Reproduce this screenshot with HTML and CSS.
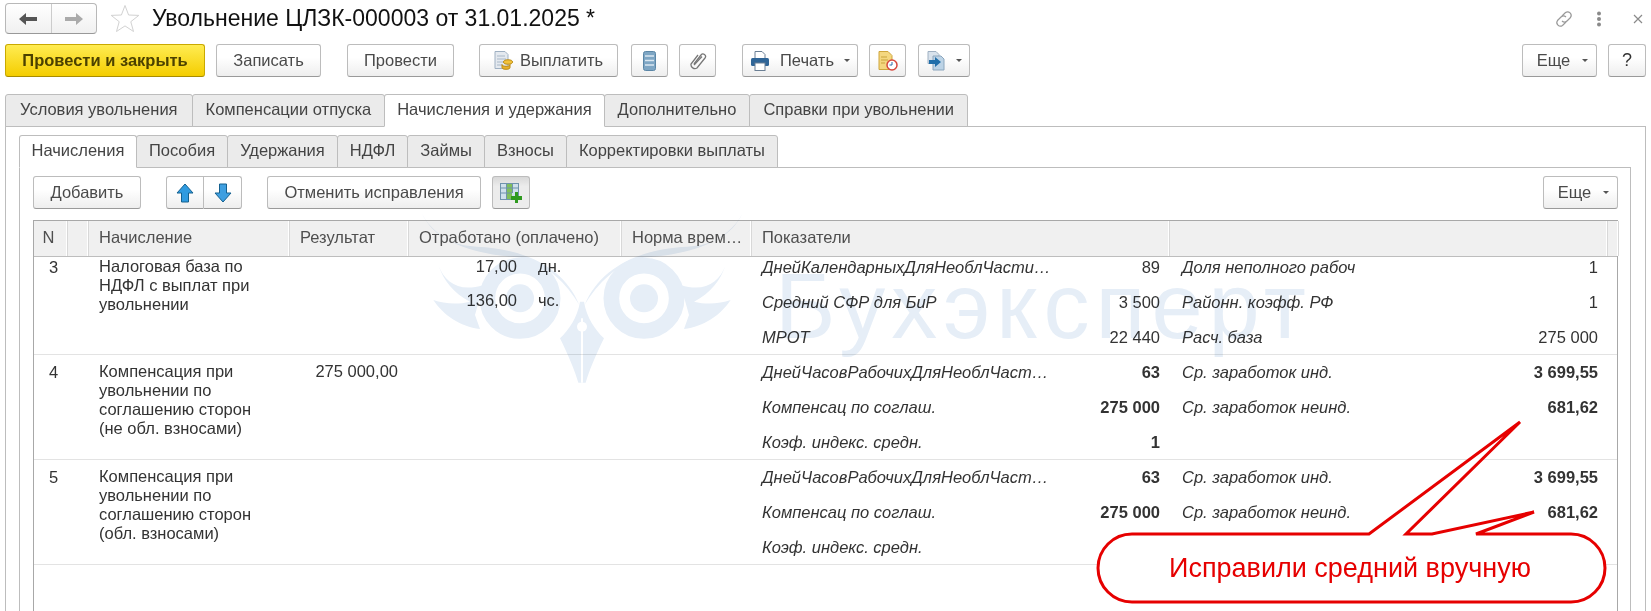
FILE: index.html
```html
<!DOCTYPE html>
<html lang="ru">
<head>
<meta charset="utf-8">
<title>Увольнение ЦЛЗК-000003</title>
<link rel="stylesheet" href="styles.css">
</head>
<body>
<div class="page">
  <header class="head">
    <div class="nav">
      <button class="nav-btn"><svg width="18" height="14" viewBox="0 0 18 14"><path d="M0 7 7 1v4h11v4H7v4z" fill="#555"/></svg></button>
      <button class="nav-btn"><svg width="18" height="14" viewBox="0 0 18 14"><path d="M18 7 11 1v4H0v4h11v4z" fill="#aaa"/></svg></button>
    </div>
    <svg class="star" width="30" height="29" viewBox="0 0 30 29"><path d="M15 1.500 18.600 11 28.800 11.400 20.800 17.700 23.500 27.500 15 21.900 6.500 27.500 9.200 17.700 1.200 11.400 11.400 11z" fill="#fff" stroke="#d2d2d2"/></svg>
    <h1 class="title">Увольнение ЦЛЗК-000003 от 31.01.2025 *</h1>
    <div class="head-tools">
      <svg width="22" height="22" viewBox="0 0 22 22" fill="none" stroke="#999" stroke-width="1.200"><path d="M9 8 12.500 4.500a3.600 3.600 0 0 1 5 5L14 13a3.600 3.600 0 0 1-5 0"/><path d="M13 14 9.500 17.500a3.600 3.600 0 0 1-5-5L8 9a3.600 3.600 0 0 1 5 0"/></svg>
      <svg class="dots" width="6" height="16" viewBox="0 0 6 16"><circle cx="3" cy="2.500" r="2" fill="#8a8a8a"/><circle cx="3" cy="8" r="2" fill="#8a8a8a"/><circle cx="3" cy="13.500" r="2" fill="#8a8a8a"/></svg>
      <svg class="close" width="10" height="10" viewBox="0 0 10 10"><path d="M1 1 9 9M9 1 1 9" stroke="#8a8a8a" stroke-width="1.200"/></svg>
    </div>
  </header>

  <div class="toolbar">
    <button class="btn btn-primary w-close">Провести и закрыть</button>
    <button class="btn w-save">Записать</button>
    <button class="btn w-post">Провести</button>
    <button class="btn w-pay">
      <svg width="20" height="19" viewBox="0 0 20 19"><path d="M1 .5h10l3 3v14H1z" fill="#e4e9ef" stroke="#9fb0c2"/><path d="M3 5h8M3 8h9M3 11h6M3 14h5" stroke="#a9b8c8"/><ellipse cx="14" cy="11" rx="4.500" ry="2.200" fill="#f3c33a" stroke="#b98a14"/><path d="M8 13.500c0 1 1 1.800 4 1.800s4-.8 4-1.800v3c0 1-1 1.800-4 1.800s-4-.8-4-1.800z" fill="#e9b128" stroke="#b98a14"/></svg>
      Выплатить
    </button>
    <button class="btn w-icon">
      <svg width="13" height="20" viewBox="0 0 13 20"><rect x=".5" y=".5" width="12" height="19" rx="2" fill="#7ea6c4" stroke="#5b86a6"/><path d="M2 5h9M2 9.500h9M2 14h9" stroke="#dbe8f1" stroke-width="1.500"/></svg>
    </button>
    <button class="btn w-icon">
      <svg width="18" height="20" viewBox="0 0 18 20" fill="none" stroke="#777" stroke-width="1.300"><path d="M5 13 12 4a2.500 2.500 0 0 1 4 3L8 17a4 4 0 0 1-6-4l7-9"/><path d="M5 14 13 5.500"/></svg>
    </button>
    <button class="btn w-print">
      <svg width="20" height="20" viewBox="0 0 20 20"><path d="M5 .5h7l3 3V8H5z" fill="#fff" stroke="#6b7f94"/><rect x="1" y="7" width="18" height="8" rx="1.500" fill="#2f6597"/><rect x="5" y="12" width="10" height="7.500" fill="#fff" stroke="#6b7f94"/></svg>
      Печать <i class="caret"></i>
    </button>
    <button class="btn w-icon">
      <svg width="20" height="20" viewBox="0 0 20 20"><path d="M1 .5h9l4 4v14H1z" fill="#f4d77f" stroke="#cfa63c"/><path d="M3 6h6M3 9h7M3 12h4" stroke="#c9a33d"/><circle cx="14" cy="14" r="5" fill="#fff" stroke="#d6473c" stroke-width="1.500"/><path d="M14 11v3h-2.500" stroke="#2c6fa8" fill="none"/></svg>
    </button>
    <button class="btn w-send">
      <svg width="19" height="20" viewBox="0 0 19 20"><path d="M1 .5h8l3 3v9H1z" fill="#d8e2ec" stroke="#9fb0c2"/><path d="M6 5h8l3 3v11H6z" fill="#bcd3e6" stroke="#8ca6bd"/><path d="M2 9 8 9V6l6 5-6 5v-3H2z" fill="#1f6eaa"/></svg>
      <i class="caret"></i>
    </button>
    <span class="spacer"></span>
    <button class="btn w-more">Еще <i class="caret"></i></button>
    <button class="btn w-help">?</button>
  </div>

  <nav class="tabs main-tabs">
    <a class="tab">Условия увольнения</a>
    <a class="tab">Компенсации отпуска</a>
    <a class="tab active">Начисления и удержания</a>
    <a class="tab">Дополнительно</a>
    <a class="tab">Справки при увольнении</a>
  </nav>
  <section class="panel">
    <nav class="tabs sub-tabs">
      <a class="tab active">Начисления</a>
      <a class="tab">Пособия</a>
      <a class="tab">Удержания</a>
      <a class="tab">НДФЛ</a>
      <a class="tab">Займы</a>
      <a class="tab">Взносы</a>
      <a class="tab">Корректировки выплаты</a>
    </nav>
    <section class="panel inner">
      <div class="toolbar sub">
        <button class="btn w-add">Добавить</button>
        <div class="group">
          <button class="btn w-arrow"><svg width="18" height="20" viewBox="0 0 18 20"><path d="M9 1 17 10H12.500V19H5.500V10H1z" fill="#2f9be0" stroke="#14608f"/></svg></button>
          <button class="btn w-arrow"><svg width="18" height="20" viewBox="0 0 18 20"><path d="M9 19 17 10H12.500V1H5.500V10H1z" fill="#3f9fe0" stroke="#14608f"/></svg></button>
        </div>
        <button class="btn w-undo">Отменить исправления</button>
        <button class="btn w-toggle pressed">
          <svg width="22" height="20" viewBox="0 0 22 20"><rect x=".5" y=".5" width="18" height="16" fill="#cfe0ec" stroke="#6f93ac"/><rect x="7" y="1" width="5" height="15" fill="#7fbf5a"/><path d="M1 5h17M1 10h11M6.500 1v15M12.500 1v9" stroke="#6f93ac"/><path d="M15 9v4h-4v4h4v3h3v-3h4v-4h-4V9z" fill="#2e9a1f"/></svg>
        </button>
        <span class="spacer"></span>
        <button class="btn w-more">Еще <i class="caret"></i></button>
      </div>

      <div class="table">
        <div class="cols thead">
          <div class="th center">N</div>
          <div class="th"></div>
          <div class="th">Начисление</div>
          <div class="th">Результат</div>
          <div class="th">Отработано (оплачено)</div>
          <div class="th">Норма врем…</div>
          <div class="th">Показатели</div>
          <div class="th"></div>
          <div class="th"></div>
        </div>
        <div class="tbody">
          <div class="cols row first">
            <div class="td center">3</div>
            <div class="td"></div>
            <div class="td">Налоговая база по<br>НДФЛ с выплат при<br>увольнении</div>
            <div class="td"></div>
            <div class="worked">
              <span class="wv">17,00</span><span class="wu">дн.</span>
              <span class="wv">136,00</span><span class="wu">чс.</span>
            </div>
            <div class="td"></div>
            <div class="ind">
              <span class="il">ДнейКалендарныхДляНеоблЧасти…</span><span class="iv">89</span><span class="il">Доля неполного рабоч</span><span class="iv">1</span>
              <span class="il">Средний СФР для БиР</span><span class="iv">3 500</span><span class="il">Районн. коэфф. РФ</span><span class="iv">1</span>
              <span class="il">МРОТ</span><span class="iv">22 440</span><span class="il">Расч. база</span><span class="iv">275 000</span>
            </div>
          </div>
          <div class="cols row">
            <div class="td center">4</div>
            <div class="td"></div>
            <div class="td">Компенсация при<br>увольнении по<br>соглашению сторон<br>(не обл. взносами)</div>
            <div class="td result">275 000,00</div>
            <div class="td"></div>
            <div class="td"></div>
            <div class="ind strong">
              <span class="il">ДнейЧасовРабочихДляНеоблЧаст…</span><span class="iv">63</span><span class="il">Ср. заработок инд.</span><span class="iv">3 699,55</span>
              <span class="il">Компенсац по соглаш.</span><span class="iv">275 000</span><span class="il">Ср. заработок неинд.</span><span class="iv">681,62</span>
              <span class="il">Коэф. индекс. средн.</span><span class="iv">1</span><span class="il"></span><span class="iv"></span>
            </div>
          </div>
          <div class="cols row">
            <div class="td center">5</div>
            <div class="td"></div>
            <div class="td">Компенсация при<br>увольнении по<br>соглашению сторон<br>(обл. взносами)</div>
            <div class="td"></div>
            <div class="td"></div>
            <div class="td"></div>
            <div class="ind strong">
              <span class="il">ДнейЧасовРабочихДляНеоблЧаст…</span><span class="iv">63</span><span class="il">Ср. заработок инд.</span><span class="iv">3 699,55</span>
              <span class="il">Компенсац по соглаш.</span><span class="iv">275 000</span><span class="il">Ср. заработок неинд.</span><span class="iv">681,62</span>
              <span class="il">Коэф. индекс. средн.</span><span class="iv"></span><span class="il"></span><span class="iv"></span>
            </div>
          </div>
        </div>
      </div>
    </section>
  </section>
</div>

<div class="watermark">
  <svg class="owl" width="340" height="200" viewBox="0 0 1020 600">
    <g fill="#e6eef7">
      <path d="M5 25C40 95 100 122 170 125 300 130 430 180 478 300 440 235 380 175 300 158 200 150 60 130 5 25Z"/>
      <path d="M968 25C933 95 873 122 803 125 673 130 543 180 494 300 532 235 592 175 672 158 772 150 912 130 968 25Z"/>
      <path d="M55 180C75 235 120 262 190 240L165 330 180 372C120 365 70 330 40 285 70 295 110 300 150 290 100 265 70 225 55 180Z"/>
      <path d="M917 180C897 235 852 262 782 240L807 330 792 372C852 365 902 330 932 285 902 295 862 300 822 290 872 265 902 225 917 180Z"/>
      <path d="M480 290C472 340 445 375 420 400 445 450 465 500 475 533H497C507 500 527 450 552 400 527 375 500 340 492 290Z"/>
    </g>
    <g fill="none" stroke="#e6eef7" stroke-width="47">
      <circle cx="300" cy="280" r="98"/>
      <circle cx="672" cy="280" r="98"/>
    </g>
    <g fill="#e6eef7">
      <circle cx="300" cy="280" r="42"/>
      <circle cx="672" cy="280" r="42"/>
    </g>
    <path d="M486 340V533" stroke="#fff" stroke-width="6"/>
    <circle cx="486" cy="365" r="15" fill="#fff"/>
  </svg>
  <span class="wm-text">Бухэксперт</span>
</div>

<div class="callout">
  <svg width="1651" height="611" viewBox="0 0 1651 611"><path d="M1132 534H1369L1520 422 1406 534H1432L1534 512 1476 534H1571A34 34 0 0 1 1571 602H1132A34 34 0 0 1 1132 534Z" fill="#fff" stroke="#e60000" stroke-width="3" stroke-linejoin="miter"/></svg>
  <span class="callout-text">Исправили средний вручную</span>
</div>
</body>
</html>
```

FILE: styles.css
```css
* { box-sizing: border-box; }
html, body { margin: 0; padding: 0; }
body {
  width: 1651px;
  height: 611px;
  overflow: hidden;
  position: relative;
  background: #fff;
  font-family: "Liberation Sans", Arial, sans-serif;
  font-size: 16.5px;
  color: #333;
}
.page { height: 640px; padding: 3px 5px 0; display: flex; flex-direction: column; }

.head { display: flex; align-items: center; height: 31px; }
.nav {
  display: flex; width: 92px; height: 31px;
  border: 1px solid #b8b8b8; border-bottom-color: #999; border-radius: 4px;
  background: linear-gradient(#fff, #f0f0f0);
  overflow: hidden;
}
.nav-btn { flex: 1; border: 0; background: none; padding: 0; display: flex; align-items: center; justify-content: center; }
.nav-btn + .nav-btn { border-left: 1px solid #ccc; }
.star { margin-left: 13px; }
.title { margin: 0 0 0 12px; font-size: 23px; font-weight: 400; color: #111; white-space: nowrap; }
.head-tools { margin-left: auto; display: flex; align-items: center; padding-right: 3px; }
.dots { margin-left: 21px; }
.close { margin-left: 31px; }

.toolbar { display: flex; height: 33px; margin-top: 10px; flex: none; }
.toolbar.sub { margin-top: 0; }
.spacer { flex: 1; }
.btn {
  height: 33px; padding: 0; margin-right: 11px;
  display: inline-flex; align-items: center; justify-content: center; gap: 10px;
  font: inherit; color: #4a4a4a;
  border: 1px solid #bcbcbc; border-bottom-color: #9a9a9a; border-radius: 3px;
  background: linear-gradient(#fff 40%, #eee);
  white-space: nowrap;
}
.btn-primary {
  font-weight: 700; color: #4b4100;
  border-color: #c9a900; border-bottom-color: #a88c00;
  background: linear-gradient(#ffec52, #f4cd00);
}
.w-close { width: 200px; }
.w-save { width: 105px; margin-right: 26px; }
.w-post { width: 107px; margin-right: 25px; }
.w-pay { width: 139px; margin-right: 13px; gap: 6px; }
.w-icon { width: 37px; }
.w-toggle { width: 38px; }
.w-print { width: 116px; margin-left: 15px; }
.w-send { width: 52px; margin-left: 1px; }
.w-more { width: 75px; gap: 12px; padding-left: 6px; }
.w-help { width: 38px; margin-right: 0; font-size: 18px; color: #333; }
.w-add { width: 108px; margin-right: 25px; }
.w-undo { width: 214px; }
.pressed { background: linear-gradient(#d8d8d8, #ececec 30%, #ececec); }
.group { display: flex; margin-right: 25px; }
.w-arrow { width: 38px; margin: 0; border-radius: 3px 0 0 3px; }
.w-arrow + .w-arrow { border-left: 0; border-radius: 0 3px 3px 0; }
.toolbar > .btn:last-child { margin-right: 0; }
.caret { width: 0; height: 0; border: 3px solid transparent; border-top: 3px solid #555; border-bottom: 0; }

.tabs { display: flex; height: 33px; margin-top: 17px; position: relative; z-index: 1; flex: none; }
.tab {
  height: 33px; padding: 0 13px 2px;
  display: flex; align-items: center;
  background: #ebebeb; color: #444; white-space: nowrap;
  border: 1px solid #bdbdbd; border-radius: 3px 3px 0 0;
  margin-right: -1px;
}
.tab.active { background: #fff; border-bottom-color: #fff; z-index: 1; position: relative; }
.main-tabs .tab:first-child { padding-left: 14px; padding-right: 14px; }
.main-tabs .tab.active { padding-left: 12px; padding-right: 12px; }
.sub-tabs .tab { padding-left: 12px; padding-right: 12px; }
.sub-tabs .tab.active { padding-left: 11.5px; padding-right: 11.5px; }
.panel {
  flex: 1; display: flex; flex-direction: column;
  margin-top: -1px; padding: 0 14px 0 13px;
  border: 1px solid #bdbdbd;
  min-height: 0;
}
.panel > .tabs { margin-top: 8px; }
.panel.inner { padding: 8px 12px 0 13px; }

.table {
  flex: 1; margin-top: 11px; min-height: 0;
  display: flex; flex-direction: column;
  border: 1px solid #a8a8a8; border-bottom: 0;
}
.cols { display: grid; grid-template-columns: 34px 21px 201px 119px 213px 130px 418px 438px 10px; }
.thead { height: 36px; flex: none; background: #f0f0f0; border-bottom: 1px solid #bdbdbd; }
.th {
  display: flex; align-items: center; padding: 0 0 2px 10px;
  border-right: 1px solid #d8d8d8; box-shadow: inset -1px 0 0 #fff;
  color: #4f4f4f; white-space: nowrap;
}
.th.center { justify-content: center; padding: 0 4px 2px 0; }
.tbody { flex: 1; overflow: hidden; min-height: 0; }
.row { height: 105px; border-bottom: 1px solid #e3e3e3; }
.row.first { margin-top: -7px; }
.td { padding: 7px 0 0 10px; line-height: 19px; color: #333; }
.td.center { text-align: center; padding-left: 5px; padding-top: 8px; }
.td.result { text-align: right; padding-right: 11px; }
.worked { display: grid; grid-template-columns: 108px auto; grid-auto-rows: 33.500px; column-gap: 21px; align-items: center; align-content: start; color: #333; }
.wv { text-align: right; }
.ind { grid-column: 7 / 10; display: grid; grid-template-columns: 296px 102px 320px 118px; grid-auto-rows: 35px; align-items: center; padding-left: 10px; color: #333; }
.il { font-style: italic; white-space: nowrap; }
.il:nth-child(4n+3) { padding-left: 22px; }
.iv { text-align: right; }
.ind.strong .iv { font-weight: 700; }

.watermark { position: absolute; inset: 0; mix-blend-mode: multiply; pointer-events: none; }
.owl { position: absolute; left: 420px; top: 205px; }
.wm-text { position: absolute; left: 775px; top: 253px; font-size: 92px; line-height: 106px; letter-spacing: 6px; color: #e6eef7; white-space: nowrap; }

.callout { position: absolute; inset: 0; pointer-events: none; }
.callout svg { position: absolute; left: 0; top: 0; }
.callout-text { position: absolute; left: 1169px; top: 552px; font-size: 27px; line-height: 32px; color: #e60000; white-space: nowrap; }
```
